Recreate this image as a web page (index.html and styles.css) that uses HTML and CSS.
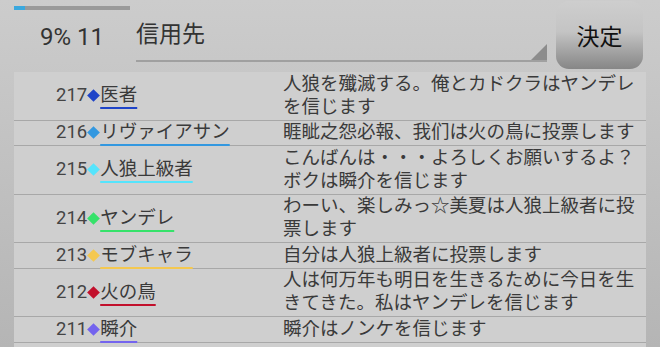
FILE: index.html
```html
<!doctype html>
<html lang="ja">
  <head>
    <meta charset="UTF-8" />
    <meta name="viewport" content="width=device-width, initial-scale=1.0" />
    <title>投票</title>
    <link rel="stylesheet" href="styles.css">
  </head>
  <body>
    <header class="top">
      <div class="status">
        <div class="progress"><div class="progress-fill" style="width: 9.5%"></div></div>
        <div class="count">9% 11</div>
      </div>
      <div class="target">信用先</div>
      <button class="decide" type="button">決定</button>
    </header>

    <ul class="log">
      <li class="entry">
        <div class="who"><span class="no">217</span><span class="gem navy"></span><span class="name navy">医者</span></div>
        <div class="msg">人狼を殲滅する。俺とカドクラはヤンデレを信じます</div>
      </li>
      <li class="entry">
        <div class="who"><span class="no">216</span><span class="gem sky"></span><span class="name sky">リヴァイアサン</span></div>
        <div class="msg">睚眦之怨必報、我们は火の鳥に投票します</div>
      </li>
      <li class="entry">
        <div class="who"><span class="no">215</span><span class="gem cyan"></span><span class="name cyan">人狼上級者</span></div>
        <div class="msg">こんばんは・・・よろしくお願いするよ？ボクは瞬介を信じます</div>
      </li>
      <li class="entry">
        <div class="who"><span class="no">214</span><span class="gem green"></span><span class="name green">ヤンデレ</span></div>
        <div class="msg">わーい、楽しみっ☆美夏は人狼上級者に投票します</div>
      </li>
      <li class="entry">
        <div class="who"><span class="no">213</span><span class="gem yellow"></span><span class="name yellow">モブキャラ</span></div>
        <div class="msg">自分は人狼上級者に投票します</div>
      </li>
      <li class="entry">
        <div class="who"><span class="no">212</span><span class="gem red"></span><span class="name red">火の鳥</span></div>
        <div class="msg">人は何万年も明日を生きるために今日を生きてきた。私はヤンデレを信じます</div>
      </li>
      <li class="entry">
        <div class="who"><span class="no">211</span><span class="gem violet"></span><span class="name violet">瞬介</span></div>
        <div class="msg">瞬介はノンケを信じます</div>
      </li>
    </ul>
  </body>
</html>
```

FILE: styles.css
```css
body {
  margin: 0;
  height: 347px;
  overflow: hidden;
  background: linear-gradient(#cccccc, #b5b5b5);
  font-family: Roboto, "Noto Sans CJK JP", sans-serif;
  color: #3a3a3a;
}

/* header */
.top {
  display: flex;
  align-items: flex-start;
  height: 72px;
  padding-left: 14px;
}
.status {
  width: 116px;
  padding-top: 6px;
}
.progress {
  height: 4px;
  background: #9a9a9a;
}
.progress-fill {
  height: 100%;
  background: #3aa8de;
}
.count {
  margin-top: 13px;
  font-size: 24px;
  text-align: center;
  color: #333;
}
.target {
  position: relative;
  box-sizing: border-box;
  width: 411px;
  height: 62px;
  margin-left: 6px;
  padding-top: 15px;
  font-size: 23px;
  color: #333;
  border-bottom: 2px solid #a0a0a0;
}
.target::after {
  content: "";
  position: absolute;
  right: 0;
  bottom: 0;
  width: 16px;
  height: 16px;
  background: #8c8c8c;
  clip-path: polygon(100% 0, 100% 100%, 0 100%);
}
.decide {
  width: 87px;
  height: 68px;
  margin: 1px 0 0 9px;
  border: none;
  border-radius: 13px;
  background: linear-gradient(#cecece 0%, #c4c4c4 45%, #868686 100%);
  font-family: inherit;
  font-size: 23px;
  color: #111;
}

/* list */
.log {
  list-style: none;
  margin: 0 0 0 14px;
  padding: 0;
  width: 632px;
  height: 275px;
  background: #cfcfcf;
}
.entry {
  display: grid;
  grid-template-columns: 269px 1fr;
  padding: 0.75px 0;
  border-bottom: 1px solid #a8a8a8;
  font-size: 18.5px;
  line-height: 23px;
}
.who {
  display: flex;
  align-items: center;
  padding-left: 42px;
}
.no {
  color: #444;
}
.gem {
  display: inline-block;
  width: 9px;
  height: 9px;
  margin: 0 2px;
  transform: rotate(45deg);
  background: currentColor;
}
.name {
  color: #3a3a3a;
  text-decoration: underline 2px;
  text-underline-offset: 6px;
}
.msg {
  padding-right: 6px;
}

.navy { color: #1f44c8; text-decoration-color: #1f44c8; }
.sky { color: #3398e0; text-decoration-color: #3398e0; }
.cyan { color: #55e4fc; text-decoration-color: #55e4fc; }
.green { color: #36e26a; text-decoration-color: #36e26a; }
.yellow { color: #f4c850; text-decoration-color: #f4c850; }
.red { color: #c2102c; text-decoration-color: #c2102c; }
.violet { color: #7464ee; text-decoration-color: #7464ee; }
.name.navy, .name.sky, .name.cyan, .name.green, .name.yellow, .name.red, .name.violet {
  color: #3a3a3a;
}
```
